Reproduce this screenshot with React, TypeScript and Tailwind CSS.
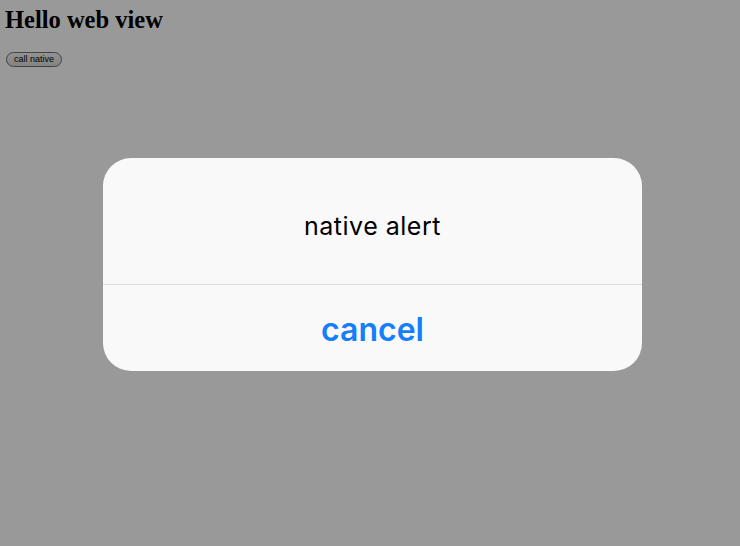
export default function App() {
  return (
    <div className="relative min-h-[546px] bg-white">
      {/* Page */}
      <div className="px-[5px] pt-[6px]">
        <h1 className="font-['Liberation_Serif',serif] text-[24.5px] font-bold leading-[28px] text-black">
          Hello web view
        </h1>
        <button className="ml-[1px] mt-[18px] flex h-[15px] w-[56px] items-center justify-center rounded-full border border-[#6e6e6e] bg-gradient-to-b from-[#f4f4f4] to-[#dcdcdc] font-['Liberation_Sans',sans-serif] text-[9px] leading-none text-black">
          call native
        </button>
      </div>

      {/* Alert overlay */}
      <div className="absolute inset-0 bg-black/40 pl-[103px] pt-[158px]">
        <div className="flex w-[539px] flex-col overflow-hidden rounded-[28px] bg-[#f9f9f9] font-['Inter',sans-serif]">
          <div className="flex h-[126px] items-center justify-center pt-[11px] text-[25px] tracking-[0.02em] text-black">
            native alert
          </div>
          <div className="h-px bg-[#dcdcdc]" />
          <div className="flex h-[86px] items-center justify-center pt-[4px] text-[32px] font-semibold text-[#147efb]">
            cancel
          </div>
        </div>
      </div>
    </div>
  );
}
